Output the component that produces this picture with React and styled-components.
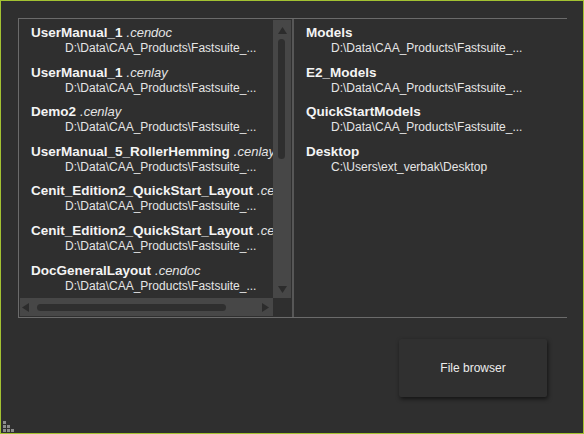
import React from "react";
import styled, { createGlobalStyle } from "styled-components";

const Global = createGlobalStyle`
  html, body { margin: 0; padding: 0; background: #2f2f2f; }
  * { box-sizing: border-box; }
`;

const Window = styled.div`
  width: 584px;
  height: 434px;
  border: 1px solid #a3c232;
  background: #2f2f2f;
  padding: 17px 16px 0 17px;
  display: flex;
  flex-direction: column;
  font-family: "Liberation Sans", Arial, sans-serif;
  color: #f2f2f2;
  overflow: hidden;
`;

const Frame = styled.div`
  height: 300px;
  border-top: 1px solid #6b6b6b;
  border-bottom: 1px solid #6b6b6b;
  border-left: 1px solid #6b6b6b;
  display: flex;
`;

const RecentPane = styled.div`
  width: 272px;
  flex: none;
  display: grid;
  grid-template-columns: 254px 18px;
  grid-template-rows: 1px 278px 18px;
  grid-template-areas: "gap gap" "list vbar" "hbar corner";
`;

const ListViewport = styled.div`
  grid-area: list;
  overflow: hidden;
  padding: 5px 0 0 12px;
`;

const Entries = styled.div`
  width: max-content;
`;

const Entry = styled.div`
  height: 39.6px;
`;

const Title = styled.div`
  font-weight: 700;
  font-size: 13.5px;
  line-height: 16px;
  color: #f4f4f4;
  white-space: nowrap;
`;

const Ext = styled.span`
  font-weight: 400;
  font-style: italic;
  font-size: 13px;
  color: #e4e4e4;
  margin-left: 4px;
`;

const Path = styled.div`
  font-size: 12px;
  line-height: 15px;
  color: #e6e6e6;
  white-space: nowrap;
  padding-left: ${(p) => p.$indent}px;
`;

const VBar = styled.div`
  grid-area: vbar;
  background: #474747;
  display: flex;
  flex-direction: column;
  align-items: center;
  padding: 7px 0 5px;
`;

const HBar = styled.div`
  grid-area: hbar;
  background: #474747;
  display: flex;
  align-items: center;
  padding: 0 4px 0 2px;
  margin-left: 1px;
`;

const Corner = styled.div`
  grid-area: corner;
  background: #2f2f2f;
`;

const Thumb = styled.div`
  background: #2f2f2f;
  border-radius: 4px;
  ${(p) =>
    p.$vertical
      ? `width: 7px; height: 120px; margin: 5px 0 0 -1px;`
      : `height: 7px; width: 189px; margin-left: 8px;`}
`;

const Spacer = styled.div`
  flex: 1;
`;

const Arrow = ({ dir }) => {
  const pts = {
    up: "0,7 4.5,0 9,7",
    down: "0,0 4.5,7 9,0",
    left: "7,0 0,4.5 7,9",
    right: "0,0 7,4.5 0,9",
  }[dir];
  const vertical = dir === "up" || dir === "down";
  return (
    <svg width={vertical ? 9 : 7} height={vertical ? 7 : 9} viewBox={vertical ? "0 0 9 7" : "0 0 7 9"}>
      <polygon points={pts} fill="#2c2c2c" />
    </svg>
  );
};

const Divider = styled.div`
  width: 2px;
  margin-left: 1px;
  background: #575757;
  flex: none;
`;

const PlacesPane = styled.div`
  flex: 1;
  padding: 6px 0 0 12px;
  overflow: hidden;
`;

const Footer = styled.div`
  display: flex;
  justify-content: flex-end;
  padding: 21px 20px 0 0;
`;

const Button = styled.button`
  width: 148px;
  height: 58px;
  background: #303030;
  border: none;
  border-radius: 2px;
  box-shadow: 1px 2px 4px rgba(0, 0, 0, 0.6);
  color: #ececec;
  font-family: "Liberation Sans", Arial, sans-serif;
  font-size: 12px;
  padding: 0;
`;

const Grip = styled.div`
  margin-top: auto;
  margin-left: -16px;
  margin-bottom: 1px;
  line-height: 0;
`;

const recent = [
  { name: "UserManual_1", ext: ".cendoc", path: "D:\\Data\\CAA_Products\\Fastsuite_..." },
  { name: "UserManual_1", ext: ".cenlay", path: "D:\\Data\\CAA_Products\\Fastsuite_..." },
  { name: "Demo2", ext: ".cenlay", path: "D:\\Data\\CAA_Products\\Fastsuite_..." },
  { name: "UserManual_5_RollerHemming", ext: ".cenlay", path: "D:\\Data\\CAA_Products\\Fastsuite_..." },
  { name: "Cenit_Edition2_QuickStart_Layout", ext: ".cenlay", path: "D:\\Data\\CAA_Products\\Fastsuite_..." },
  { name: "Cenit_Edition2_QuickStart_Layout", ext: ".cendoc", path: "D:\\Data\\CAA_Products\\Fastsuite_..." },
  { name: "DocGeneralLayout", ext: ".cendoc", path: "D:\\Data\\CAA_Products\\Fastsuite_..." },
];

const places = [
  { name: "Models", path: "D:\\Data\\CAA_Products\\Fastsuite_..." },
  { name: "E2_Models", path: "D:\\Data\\CAA_Products\\Fastsuite_..." },
  { name: "QuickStartModels", path: "D:\\Data\\CAA_Products\\Fastsuite_..." },
  { name: "Desktop", path: "C:\\Users\\ext_verbak\\Desktop" },
];

export default function App() {
  return (
    <>
      <Global />
      <Window>
        <Frame>
          <RecentPane>
            <ListViewport>
              <Entries>
                {recent.map((r, i) => (
                  <Entry key={i}>
                    <Title>
                      {r.name}
                      <Ext>{r.ext}</Ext>
                    </Title>
                    <Path $indent={34}>{r.path}</Path>
                  </Entry>
                ))}
              </Entries>
            </ListViewport>
            <VBar>
              <Arrow dir="up" />
              <Thumb $vertical />
              <Spacer />
              <Arrow dir="down" />
            </VBar>
            <HBar>
              <Arrow dir="left" />
              <Thumb />
              <Spacer />
              <Arrow dir="right" />
            </HBar>
            <Corner />
          </RecentPane>
          <Divider />
          <PlacesPane>
            {places.map((p, i) => (
              <Entry key={i}>
                <Title>{p.name}</Title>
                <Path $indent={25}>{p.path}</Path>
              </Entry>
            ))}
          </PlacesPane>
        </Frame>
        <Footer>
          <Button>File browser</Button>
        </Footer>
        <Grip>
          <svg width="12" height="12" viewBox="0 0 12 12">
            <g fill="#8c8c8c">
              <rect x="1" y="1" width="3" height="3" />
              <rect x="1" y="5" width="3" height="3" />
              <rect x="5" y="5" width="3" height="3" />
              <rect x="1" y="9" width="3" height="3" />
              <rect x="5" y="9" width="3" height="3" />
              <rect x="9" y="9" width="3" height="3" />
            </g>
          </svg>
        </Grip>
      </Window>
    </>
  );
}
